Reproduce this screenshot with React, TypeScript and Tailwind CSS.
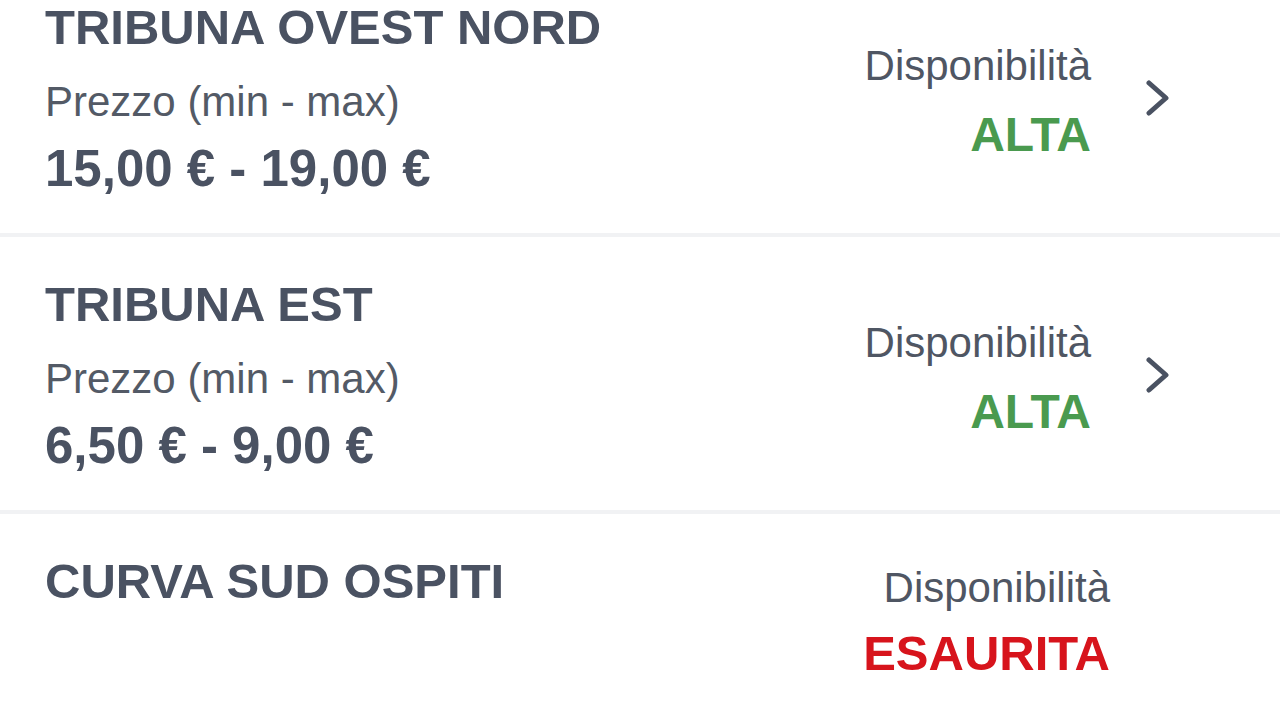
import React from 'react';

interface Sector {
  name: string;
  price?: string;
  status: 'ALTA' | 'ESAURITA';
}

const SECTORS: Sector[] = [
  { name: 'TRIBUNA OVEST NORD', price: '15,00 € - 19,00 €', status: 'ALTA' },
  { name: 'TRIBUNA EST', price: '6,50 € - 9,00 €', status: 'ALTA' },
  { name: 'CURVA SUD OSPITI', status: 'ESAURITA' },
];

const Chevron = () => (
  <svg width="25" height="36" viewBox="0 0 25 36" fill="none">
    <polyline points="4,3 21,18 4,33" stroke="#4a5262" strokeWidth="5" strokeLinecap="round" strokeLinejoin="round" />
  </svg>
);

const SectorRow: React.FC<{ sector: Sector }> = ({ sector }) => {
  const available = sector.status === 'ALTA';
  return (
    <div className={`flex h-[273px] pl-[45px] ${available ? 'pr-[110px]' : 'pr-[170px]'}`}>
      {/* left: name + price */}
      <div className="flex-1 pt-[43px]">
        <h3 className="text-[49px] leading-none font-bold text-[#4a5262]">{sector.name}</h3>
        {sector.price && (
          <>
            <p className="mt-[29px] text-[42px] leading-none text-[#535a66]">Prezzo (min - max)</p>
            <p className="mt-[20px] text-[51px] leading-none font-bold text-[#4a5262]">{sector.price}</p>
          </>
        )}
      </div>

      {/* right: availability */}
      <div className={`flex flex-col items-end text-right ${available ? 'pt-[85px]' : 'pt-[53px]'}`}>
        <span className="text-[42px] leading-none text-[#4f5663]">Disponibilità</span>
        {available ? (
          <span className="mt-[24px] text-[48px] leading-none font-bold text-[#4a9a4f]">ALTA</span>
        ) : (
          <span className="mt-[20px] text-[49px] leading-none font-bold text-[#d7141c]">ESAURITA</span>
        )}
      </div>

      {available && (
        <div className="ml-[54px] flex items-center pt-[2px]">
          <Chevron />
        </div>
      )}
    </div>
  );
};

export default function App() {
  return (
    <div className="w-[1280px] h-[720px] overflow-hidden bg-white font-['Liberation_Sans',Arial,sans-serif]">
      <div className="-mt-[40px]">
        {SECTORS.map((s, i) => (
          <div key={s.name} className={i > 0 ? 'border-t-[4px] border-[#f1f2f4]' : ''}>
            <SectorRow sector={s} />
          </div>
        ))}
      </div>
    </div>
  );
}
